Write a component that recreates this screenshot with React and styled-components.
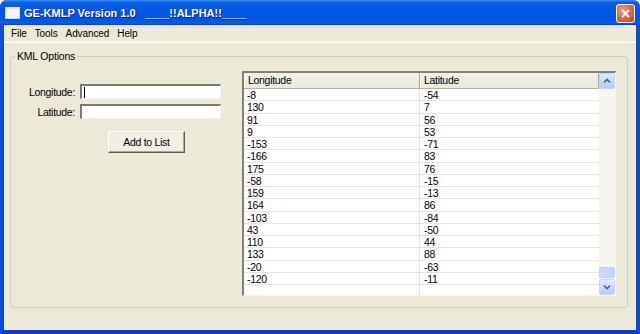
import React from 'react'
import styled, { createGlobalStyle } from 'styled-components'

const GlobalStyle = createGlobalStyle`
    html, body {
        margin: 0;
        padding: 0;
        background: #ffffff;
    }
    body {
        font-family: "Liberation Sans", Arial, sans-serif;
    }
`;

const Window = styled.div`
    width: 640px;
    height: 334px;
    display: flex;
    flex-direction: column;
    overflow: hidden;
    border-radius: 7px 7px 0 0;
    background: #0a50d8;
`;

const TitleBar = styled.div`
    height: 25px;
    flex: none;
    display: flex;
    align-items: center;
    padding: 0 5px 0 5px;
    background: linear-gradient(to bottom, #3c8ff6 0%, #0c5fe2 10%, #0056e6 45%, #0054e0 80%, #0a5fe6 92%, #003fc2 100%);
`;

const AppIcon = styled.div`
    width: 13px;
    height: 9px;
    margin-top: 1px;
    background: #f4f8ff;
    border: 1px solid #c8d8f6;
    border-top: 2px solid #dfe9fb;
`;

const Title = styled.div`
    margin-left: 4px;
    color: #ffffff;
    font-size: 11px;
    font-weight: bold;
    white-space: pre;
    text-shadow: 1px 1px 0 #0a1a8a;
    flex: 1;
`;

const CloseButton = styled.div`
    width: 17px;
    height: 17px;
    margin-top: 1px;
    border: 1px solid #ffffff;
    border-radius: 3px;
    background: radial-gradient(circle at 35% 30%, #f19a7e 0%, #e0633f 55%, #c34225 100%);
    display: flex;
    align-items: center;
    justify-content: center;
`;

const Frame = styled.div`
    flex: 1;
    display: flex;
    flex-direction: column;
    background: #ece9d8;
    border-left: 4px solid #0b4ed6;
    border-right: 4px solid #0b4ed6;
    border-bottom: 4px solid #0a3fc4;
`;

const MenuBar = styled.div`
    height: 17px;
    flex: none;
    display: flex;
    align-items: center;
    padding-left: 3px;
    border-bottom: 1px solid #ffffff;
    box-shadow: 0 -1px 0 #f4f3ea inset;
`;

const MenuItem = styled.span`
    padding: 0 4px;
    font-size: 10px;
    letter-spacing: -0.1px;
    color: #000000;
`;

const Content = styled.div`
    flex: 1;
    display: flex;
    padding: 7px 8px 22px 6px;
`;

const GroupBox = styled.fieldset`
    flex: 1;
    margin: 0;
    padding: 8px 11px 11px 0;
    border: 1px solid #d0d0bf;
    border-radius: 3px;
    display: flex;
    min-width: 0;
`;

const Caption = styled.legend`
    margin-left: 4px;
    padding: 0 2px;
    font-size: 10.5px;
    letter-spacing: -0.2px;
    line-height: 13px;
    color: #000000;
`;

const FormPane = styled.div`
    width: 231px;
    flex: none;
    display: flex;
    flex-direction: column;
    padding-top: 13px;
`;

const FieldRow = styled.div`
    display: flex;
    align-items: center;
    margin-bottom: 5px;
`;

const Label = styled.label`
    width: 64px;
    text-align: right;
    font-size: 10.5px;
    letter-spacing: -0.3px;
    color: #000000;
`;

const TextBox = styled.div`
    width: 136px;
    height: 12px;
    margin-left: 5px;
    background: #ffffff;
    border-style: solid;
    border-width: 2px 1px 1px 2px;
    border-color: #7a7a72 #f4f3ee #f4f3ee #7a7a72;
    padding-left: 2px;
    display: flex;
    align-items: center;
`;

const Caret = styled.span`
    width: 1px;
    height: 11px;
    background: #000000;
`;

const PushButton = styled.button`
    align-self: flex-start;
    margin: 7px 0 0 97px;
    width: 77px;
    height: 22px;
    padding: 0;
    font-family: inherit;
    font-size: 10.5px;
    letter-spacing: -0.3px;
    color: #000000;
    background: #f1efe4;
    border: 1px solid;
    border-color: #ffffff #5e5c54 #5e5c54 #ffffff;
    box-shadow: inset -1px -1px 0 #aca899;
`;

const ListView = styled.div`
    flex: 1;
    display: flex;
    border-style: solid;
    border-width: 2px 1px 1px 2px;
    border-color: #828177 #f6f5ef #f6f5ef #828177;
    background: #ffffff;
    min-width: 0;
`;

const ListArea = styled.div`
    flex: 1;
    display: flex;
    flex-direction: column;
    background: linear-gradient(to right, transparent 175px, #e4e4e4 175px, #e4e4e4 176px, transparent 176px);
`;

const HeaderRow = styled.div`
    display: grid;
    grid-template-columns: 176px 1fr;
    height: 15px;
    flex: none;
    background: linear-gradient(to bottom, #f3f1e8 0%, #ebe9dc 100%);
    border-bottom: 1px solid #b4b1a2;
`;

const HeaderCell = styled.div`
    font-size: 10.5px;
    letter-spacing: -0.3px;
    line-height: 15px;
    padding-left: 4px;
    color: #000000;
    border-right: 1px solid #aca899;
    box-shadow: inset 1px 0 0 #ffffff;
`;

const DataRow = styled.div`
    display: grid;
    grid-template-columns: 176px 1fr;
    height: 12.25px;
    box-sizing: border-box;
    border-bottom: 1px solid #e4e4e4;
`;

const Cell = styled.div`
    font-size: 10.5px;
    letter-spacing: -0.3px;
    line-height: 12px;
    padding-left: ${p => (p.$first ? '3px' : '4px')};
    color: #000000;
    overflow: hidden;
`;

const ScrollBar = styled.div`
    width: 16px;
    flex: none;
    display: flex;
    flex-direction: column;
    background: #f6f5f0;
`;

const ScrollButton = styled.div`
    height: 14px;
    flex: none;
    border: 1px solid #c5d4f8;
    border-radius: 2px;
    background: linear-gradient(to bottom, #e1eafe 0%, #c6d6fb 60%, #b8cbf6 100%);
    display: flex;
    align-items: center;
    justify-content: center;
`;

const Track = styled.div`
    flex: 1;
    display: flex;
    flex-direction: column;
    justify-content: flex-end;
`;

const Thumb = styled.div`
    height: 9px;
    margin-bottom: 1px;
    border: 1px solid #c0d0f6;
    border-radius: 2px;
    background: linear-gradient(to right, #cddbfc 0%, #c0d2fa 100%);
`;

const rows = [
    [-8, -54], [130, 7], [91, 56], [9, 53], [-153, -71], [-166, 83],
    [175, 76], [-58, -15], [159, -13], [164, 86], [-103, -84], [43, -50],
    [110, 44], [133, 88], [-20, -63], [-120, -11],
];

function Arrow({ down }) {
    return (
        <svg width="8" height="6" viewBox="0 0 8 6">
            <path d={down ? 'M1 1.5 L4 4.5 L7 1.5' : 'M1 4.5 L4 1.5 L7 4.5'}
                  stroke="#4d6185" strokeWidth="1.6" fill="none" />
        </svg>
    )
}

export default function App () {
    return (
        <>
            <GlobalStyle />
            <Window>
                <TitleBar>
                    <AppIcon />
                    <Title>{'GE-KMLP Version 1.0   ____!!ALPHA!!____'}</Title>
                    <CloseButton>
                        <svg width="9" height="9" viewBox="0 0 9 9">
                            <path d="M1 1 L8 8 M8 1 L1 8" stroke="#ffffff" strokeWidth="1.8" />
                        </svg>
                    </CloseButton>
                </TitleBar>
                <Frame>
                    <MenuBar>
                        <MenuItem>File</MenuItem>
                        <MenuItem>Tools</MenuItem>
                        <MenuItem>Advanced</MenuItem>
                        <MenuItem>Help</MenuItem>
                    </MenuBar>
                    <Content>
                        <GroupBox>
                            <Caption>KML Options</Caption>
                            <FormPane>
                                <FieldRow>
                                    <Label>Longitude:</Label>
                                    <TextBox><Caret /></TextBox>
                                </FieldRow>
                                <FieldRow>
                                    <Label>Latitude:</Label>
                                    <TextBox />
                                </FieldRow>
                                <PushButton>Add to List</PushButton>
                            </FormPane>
                            <ListView>
                                <ListArea>
                                    <HeaderRow>
                                        <HeaderCell>Longitude</HeaderCell>
                                        <HeaderCell>Latitude</HeaderCell>
                                    </HeaderRow>
                                    {rows.map(([lon, lat], i) => (
                                        <DataRow key={i}>
                                            <Cell $first>{lon}</Cell>
                                            <Cell>{lat}</Cell>
                                        </DataRow>
                                    ))}
                                </ListArea>
                                <ScrollBar>
                                    <ScrollButton><Arrow /></ScrollButton>
                                    <Track><Thumb /></Track>
                                    <ScrollButton><Arrow down /></ScrollButton>
                                </ScrollBar>
                            </ListView>
                        </GroupBox>
                    </Content>
                </Frame>
            </Window>
        </>
    )
}
